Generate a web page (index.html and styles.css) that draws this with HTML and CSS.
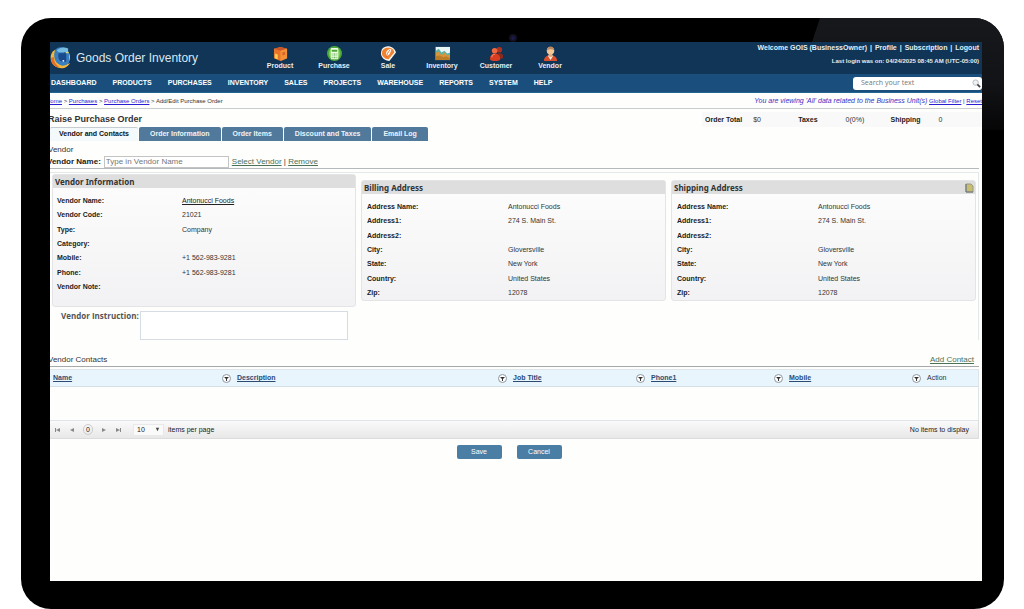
FILE: index.html
```
<!DOCTYPE html>
<html lang="en">
<head>
    <meta charset="UTF-8">
    <meta name="viewport" content="width=device-width, initial-scale=1.0">
    <title>Goods Order Inventory - Raise Purchase Order</title>
    <link rel="stylesheet" href="styles.css">
</head>
<body>
    <div class="device">
        <span class="camera"></span>
        <div class="screen">
            <header class="header">
                <div class="brand">
                    <svg class="logo" viewBox="0 0 22 24">
                        <path d="M3 5C-1 10 0 19 8 22c5 2 11 0 13-5-4 3-9 3-12 0C5 14 4 9 6 3z" fill="#f2b63c"/>
                        <path d="M1 12c0 6 4 10 9 10-4-3-6-6-6-11z" fill="#e0702c"/>
                        <path d="M17 3c5 4 5 11 1 16l-3-2c3-4 3-9 0-13z" fill="#e9e36a"/>
                        <path d="M5 5c-2 7 1 14 8 15 4 0 7-2 7-4V7h-5V1C10 0 6 1 5 5z" fill="#3a7fc0"/>
                        <path d="M7 4c3-3 8-4 12-2v4H9z" fill="#79bce3"/>
                        <path d="M9 7h8v9h-4c-4-1-5-5-4-9z" fill="#1b4a8c"/>
                        <circle cx="14" cy="15" r="1" fill="#fff"/>
                    </svg>
                    <span>Goods Order Inventory</span>
                </div>
                <nav class="shortcuts">
                    <a href="#">
                        <svg viewBox="0 0 16 16">
                            <path d="M1 3l7-2 7 2v10l-7 3-7-3z" fill="#e8752a"/>
                            <path d="M1 3l7-2 7 2-7 2z" fill="#c9562a"/>
                            <path d="M8 5l7-2v10l-7 3z" fill="#f3913a"/>
                            <path d="M2 8l3 1v5l-3-1z" fill="#ffd34d"/>
                            <path d="M10 7l3-1v3l-3 1z" fill="#d8642a"/>
                        </svg>
                        Product
                    </a>
                    <a href="#">
                        <svg viewBox="0 0 16 16">
                            <circle cx="8" cy="8" r="8" fill="#4da83a"/>
                            <circle cx="8" cy="8" r="6" fill="#79cf4b"/>
                            <rect x="4" y="2" width="8" height="12" rx="1" fill="#f1fbe9"/>
                            <path d="M5 4h6v2H5zM5 8h1v1H5zM7 8h2v1H7zM10 8h1v1h-1zM5 10h1v1H5zM7 10h2v1H7zM10 10h1v1h-1zM5 12h1v1H5zM7 12h2v1H7zM10 12h1v1h-1z" fill="#4da83a"/>
                        </svg>
                        Purchase
                    </a>
                    <a href="#">
                        <svg viewBox="0 0 16 16">
                            <path d="M4 1c5-2 11 1 12 6l-7 9C4 16 0 12 0 8c0-3 1-6 4-7z" fill="#f6f1ea"/>
                            <path d="M5 2c5-1 9 1 9 5l-6 7C4 14 1 11 1 8c0-3 1-5 4-6z" fill="#f0812d"/>
                            <path d="M6 11c-2-4 1-8 5-8 0 3-2 7-5 8z" fill="#fff"/>
                            <path d="M6 12c0-3 1-5 4-8" stroke="#e8611f" fill="none"/>
                        </svg>
                        Sale
                    </a>
                    <a href="#">
                        <svg viewBox="0 0 16 16">
                            <rect y="1" width="16" height="14" fill="#eaf6f5"/>
                            <path d="M1 5l3-2 3 4 3-2 3 3 3-1v7H1z" fill="#5fb3a5"/>
                            <path d="M1 7l3-1 3 4 3-3 3 3 3-1v6H1z" fill="#d99438"/>
                            <path d="M1 11l4-1 4 2 3-1 4 2v2H1z" fill="#b97d2a"/>
                            <path d="M0 1h1v14H0z" fill="#8b6a3c"/>
                        </svg>
                        Inventory
                    </a>
                    <a href="#">
                        <svg viewBox="0 0 16 16">
                            <circle cx="11" cy="4" r="3" fill="#b03220"/>
                            <path d="M8 14V9c1-2 6-2 7 1v3z" fill="#8e2a1c"/>
                            <circle cx="6" cy="5" r="3" fill="#f0683f"/>
                            <path d="M1 14c0-4 2-6 5-6s6 2 6 6c-2 3-9 3-11 0z" fill="#d93e23"/>
                            <path d="M3 12c0-2 1-3 3-3" stroke="#ff9a72" fill="none"/>
                        </svg>
                        Customer
                    </a>
                    <a href="#">
                        <svg viewBox="0 0 16 16">
                            <path d="M1 16c0-4 2-6 7-6s7 2 7 6z" fill="#d8502b"/>
                            <path d="M5 10l3 5 3-5z" fill="#f7efe6"/>
                            <path d="M6 8h4v3l-2 1-2-1z" fill="#e0a878"/>
                            <circle cx="8" cy="5" r="4" fill="#f3c795"/>
                            <path d="M4 5c0-6 8-6 8 0-2-2-5-2-8 0z" fill="#b98a62"/>
                        </svg>
                        Vendor
                    </a>
                </nav>
                <div class="account">
                    <div class="account-links">
                        Welcome GOIS (BusinessOwner) <i>|</i> <a href="#">Profile</a> <i>|</i> <a href="#">Subscription</a> <i>|</i> <a href="#">Logout</a>
                    </div>
                    <div class="last-login">Last login was on: 04/24/2025 08:45 AM (UTC-05:00)</div>
                </div>
            </header>

            <div class="menubar">
                <nav class="menu">
                    <a href="#">DASHBOARD</a>
                    <a href="#">PRODUCTS</a>
                    <a href="#">PURCHASES</a>
                    <a href="#">INVENTORY</a>
                    <a href="#">SALES</a>
                    <a href="#">PROJECTS</a>
                    <a href="#">WAREHOUSE</a>
                    <a href="#">REPORTS</a>
                    <a href="#">SYSTEM</a>
                    <a href="#">HELP</a>
                </nav>
                <form class="search">
                    <input type="text" placeholder="Search your text" aria-label="Search">
                    <button type="button" aria-label="Search">
                        <svg viewBox="0 0 10 10">
                            <circle cx="4" cy="4" r="3" fill="#eef2f4" stroke="#b4b9bd"/>
                            <path d="M6 6l3 3" stroke="#444" stroke-width="2"/>
                        </svg>
                    </button>
                </form>
            </div>

            <div class="crumbs">
                <div class="trail">
                    <a href="#">Home</a> &gt; <a href="#">Purchases</a> &gt; <a href="#">Purchase Orders</a> &gt; Add/Edit Purchase Order
                </div>
                <div class="filter-note">
                    <em>You are viewing 'All' data related to the Business Unit(s)</em>
                    <a href="#">Global Filter</a> | <a href="#">Reset</a>
                </div>
            </div>

            <div class="title-row">
                <h1>Raise Purchase Order</h1>
                <dl class="totals">
                    <dt>Order Total</dt><dd>$0</dd>
                    <dt>Taxes</dt><dd class="taxes">0(0%)</dd>
                    <dt>Shipping</dt><dd class="shipping">0</dd>
                </dl>
            </div>

            <div class="tabs">
                <button class="tab active">Vendor and Contacts</button>
                <button class="tab">Order Information</button>
                <button class="tab">Order Items</button>
                <button class="tab">Discount and Taxes</button>
                <button class="tab">Email Log</button>
            </div>

            <main class="content">
                <h2 class="section-title">Vendor</h2>
                <div class="vendor-row">
                    <label for="vendor">Vendor Name:</label>
                    <input id="vendor" type="text" placeholder="Type in Vendor Name">
                    <span><a href="#">Select Vendor</a> | <a href="#">Remove</a></span>
                </div>

                <div class="panels">
                    <div class="vendor-col">
                        <section class="panel vendor-panel">
                            <h3>Vendor Information</h3>
                            <table>
                                <tr><th>Vendor Name:</th><td><a href="#">Antonucci Foods</a></td></tr>
                                <tr><th>Vendor Code:</th><td>21021</td></tr>
                                <tr><th>Type:</th><td>Company</td></tr>
                                <tr><th>Category:</th><td></td></tr>
                                <tr><th>Mobile:</th><td>+1 562-983-9281</td></tr>
                                <tr><th>Phone:</th><td>+1 562-983-9281</td></tr>
                                <tr><th>Vendor Note:</th><td></td></tr>
                            </table>
                        </section>
                        <div class="instruction">
                            <label for="instruction">Vendor Instruction:</label>
                            <textarea id="instruction"></textarea>
                        </div>
                    </div>
                    <section class="panel address-panel">
                        <h3>Billing Address</h3>
                        <table>
                            <tr><th>Address Name:</th><td>Antonucci Foods</td></tr>
                            <tr><th>Address1:</th><td>274 S. Main St.</td></tr>
                            <tr><th>Address2:</th><td></td></tr>
                            <tr><th>City:</th><td>Gloversville</td></tr>
                            <tr><th>State:</th><td>New York</td></tr>
                            <tr><th>Country:</th><td>United States</td></tr>
                            <tr><th>Zip:</th><td>12078</td></tr>
                        </table>
                    </section>
                    <section class="panel address-panel">
                        <h3>
                            Shipping Address
                            <button type="button" class="book" aria-label="Address book">
                                <svg viewBox="0 0 9 10">
                                    <path d="M1 1h5l2 2v6H1z" fill="#c9bd72" stroke="#9a9a86"/>
                                    <path d="M1 1v8h7" fill="none" stroke="#66757f"/>
                                </svg>
                            </button>
                        </h3>
                        <table>
                            <tr><th>Address Name:</th><td>Antonucci Foods</td></tr>
                            <tr><th>Address1:</th><td>274 S. Main St.</td></tr>
                            <tr><th>Address2:</th><td></td></tr>
                            <tr><th>City:</th><td>Gloversville</td></tr>
                            <tr><th>State:</th><td>New York</td></tr>
                            <tr><th>Country:</th><td>United States</td></tr>
                            <tr><th>Zip:</th><td>12078</td></tr>
                        </table>
                    </section>
                </div>

                <div class="contacts-head">
                    <h2 class="section-title">Vendor Contacts</h2>
                    <a href="#">Add Contact</a>
                </div>

                <table class="grid">
                    <colgroup>
                        <col class="col-name"><col class="col-desc"><col class="col-std"><col class="col-std"><col class="col-std"><col>
                    </colgroup>
                    <thead>
                        <tr>
                            <th><div><a href="#">Name</a><button class="funnel" aria-label="Filter name"><svg viewBox="0 0 9 9"><circle cx="4.5" cy="4.5" r="4" fill="#fff" stroke="#8d979f"/><path d="M2 3h5L5 5v2H4V5z" fill="#333"/></svg></button></div></th>
                            <th><div><a href="#">Description</a><button class="funnel" aria-label="Filter description"><svg viewBox="0 0 9 9"><circle cx="4.5" cy="4.5" r="4" fill="#fff" stroke="#8d979f"/><path d="M2 3h5L5 5v2H4V5z" fill="#333"/></svg></button></div></th>
                            <th><div><a href="#">Job Title</a><button class="funnel" aria-label="Filter job title"><svg viewBox="0 0 9 9"><circle cx="4.5" cy="4.5" r="4" fill="#fff" stroke="#8d979f"/><path d="M2 3h5L5 5v2H4V5z" fill="#333"/></svg></button></div></th>
                            <th><div><a href="#">Phone1</a><button class="funnel" aria-label="Filter phone"><svg viewBox="0 0 9 9"><circle cx="4.5" cy="4.5" r="4" fill="#fff" stroke="#8d979f"/><path d="M2 3h5L5 5v2H4V5z" fill="#333"/></svg></button></div></th>
                            <th><div><a href="#">Mobile</a><button class="funnel" aria-label="Filter mobile"><svg viewBox="0 0 9 9"><circle cx="4.5" cy="4.5" r="4" fill="#fff" stroke="#8d979f"/><path d="M2 3h5L5 5v2H4V5z" fill="#333"/></svg></button></div></th>
                            <th class="action">Action</th>
                        </tr>
                    </thead>
                    <tbody>
                        <tr><td colspan="6"></td></tr>
                    </tbody>
                </table>
                <div class="pager">
                    <button aria-label="First page"><svg viewBox="0 0 6 6"><path d="M0 1h1v4H0zM5 1v4L1 3z"/></svg></button>
                    <button aria-label="Previous page"><svg viewBox="0 0 6 6"><path d="M5 1v4L1 3z"/></svg></button>
                    <span class="page-no">0</span>
                    <button aria-label="Next page"><svg viewBox="0 0 6 6"><path d="M1 1v4l4-2z"/></svg></button>
                    <button aria-label="Last page"><svg viewBox="0 0 6 6"><path d="M1 1v4l4-2zM5 1h1v4H5z"/></svg></button>
                    <div class="size">
                        <select id="page-size"><option>10</option></select>
                        <svg viewBox="0 0 6 6"><path d="M1 1h4L3 5z"/></svg>
                    </div>
                    <label for="page-size">items per page</label>
                    <span class="status">No items to display</span>
                </div>

                <div class="actions">
                    <button type="button">Save</button>
                    <button type="button">Cancel</button>
                </div>
            </main>
        </div>
    </div>
</body>
</html>
```
FILE: styles.css
```
* {
    box-sizing: border-box;
}
body {
    margin: 0;
    padding: 18px 20px 0 21px;
    height: 100vh;
    background: #fff;
    color: #333;
    font-family: "Liberation Sans", Arial, sans-serif;
    font-size: 7px;
    line-height: 10px;
}
h1, h2, h3, dl, dd {
    margin: 0;
}
button, input, select, textarea {
    margin: 0;
    padding: 0;
    border: none;
    background: none;
    color: inherit;
    font: inherit;
}
button {
    cursor: pointer;
}
svg {
    display: block;
}

/* tablet frame */
.device {
    position: relative;
    display: flex;
    min-height: 100%;
    padding: 24px 22px 28px 29px;
    border-radius: 30px;
    background: #000;
    overflow: hidden;
}
.device::before {
    content: "";
    position: absolute;
    top: 0;
    right: 0;
    width: 192px;
    height: 112px;
    background: linear-gradient(#17181c, #121316 60%, #060607);
    clip-path: polygon(8px 0, 100% 0, 100% 100%, 80% 100%, 80% 24px, 0 24px);
}
.camera {
    position: absolute;
    top: 16px;
    left: calc(50% - 4px);
    width: 8px;
    height: 8px;
    border: 2px solid #11111f;
    border-radius: 50%;
    background: #1d1a4a;
}
.screen {
    position: relative;
    flex: 1;
    min-width: 0;
    background: #fefefd;
    overflow: hidden;
}

/* top bar */
.header {
    display: flex;
    height: 32px;
    background: #103556;
    color: #e6eef5;
}
.brand {
    display: flex;
    align-items: center;
    gap: 5px;
    width: 203px;
    font-size: 12px;
    line-height: 14px;
    color: #dbe8f2;
}
.logo {
    width: 21px;
    height: 24px;
}
.shortcuts {
    display: flex;
    padding-top: 4px;
}
.shortcuts a {
    display: flex;
    flex-direction: column;
    align-items: center;
    width: 54px;
    color: #e6eef5;
    font-weight: bold;
    text-decoration: none;
}
.shortcuts svg {
    width: 15px;
    height: 15px;
}
.account {
    margin-left: auto;
    padding: 1px 3px 0 0;
    font-weight: bold;
    text-align: right;
    white-space: nowrap;
}
.account i {
    margin: 0 1px;
    font-style: normal;
}
.account a {
    color: inherit;
    text-decoration: none;
}
.last-login {
    margin-top: 3px;
    font-size: 6px;
}

.menubar {
    display: flex;
    align-items: center;
    justify-content: space-between;
    height: 19px;
    border-bottom: 1px solid #236690;
    background: #1a4f7d;
}
.menu {
    display: flex;
    gap: 16px;
    padding-left: 1px;
}
.menu a {
    color: #fff;
    font-weight: bold;
    text-decoration: none;
}
.search {
    display: flex;
    align-items: center;
    width: 129px;
    height: 13px;
    padding: 0 1px 0 8px;
    border-radius: 3px;
    background: #fff;
}
.search input {
    flex: 1;
    min-width: 0;
    outline: none;
    font-family: "Open Sans", sans-serif;
}
.search svg {
    width: 9px;
    height: 9px;
}
::placeholder {
    color: #777;
    opacity: 1;
}

.crumbs {
    display: flex;
    align-items: center;
    justify-content: space-between;
    height: 16px;
    border-bottom: 1px solid #c9cdd0;
    font-size: 6px;
}
.trail {
    margin-left: -4px;
}
.crumbs a {
    color: #2a1fd0;
}
.filter-note {
    white-space: nowrap;
}
.filter-note em {
    color: #3a2fc4;
    font-size: 7px;
}

/* title and tabs */
.title-row {
    display: flex;
    align-items: flex-end;
    justify-content: space-between;
    height: 18px;
}
.title-row h1 {
    margin-left: -2px;
    font-size: 9px;
    line-height: 16px;
}
.totals {
    display: flex;
    width: 280px;
    height: 15px;
    padding-left: 3px;
    background: #f9f9f9;
    line-height: 16px;
}
.totals dt {
    margin-right: 11px;
    color: #222;
    font-weight: bold;
}
.totals dd {
    width: 45px;
}
.totals dt:nth-of-type(2) {
    margin-right: 28px;
}
.totals dt:nth-of-type(3) {
    margin-right: 18px;
}
.totals .shipping {
    width: auto;
}
.tabs {
    display: flex;
    gap: 1px;
}
.tab {
    height: 14px;
    padding: 0 11px;
    border-radius: 2px 2px 0 0;
    background: #50799b;
    color: #eef4f8;
    font-weight: bold;
}
.tab.active {
    padding: 0 9px 1px;
    border-top: 1px solid #c5ccd2;
    background: #f4f9fb;
    color: #111;
}

/* vendor section */
.content {
    margin-right: 3px;
    padding-top: 4px;
}
.section-title {
    margin-left: -2px;
    font-size: 8px;
    font-weight: normal;
}
.vendor-row {
    display: flex;
    align-items: center;
    gap: 3px;
    height: 14px;
    border-bottom: 1px solid #b5b9bb;
    font-size: 8px;
}
.vendor-row label {
    margin-left: -3px;
    color: #222;
    font-weight: bold;
}
.vendor-row input {
    width: 125px;
    height: 12px;
    padding: 0 1px;
    border: 1px solid #c4c4c4;
    background: #fff;
}
.vendor-row a, .contacts-head a {
    color: #4b7158;
}
.panels {
    display: flex;
    align-items: flex-start;
    gap: 5px;
    margin-top: 3px;
    padding: 1px 2px 0 3px;
    border: 1px solid #e3e8e8;
    border-width: 1px 1px 0 0;
}
.vendor-col, .address-panel {
    flex: 1;
    min-width: 0;
}
.panel {
    border: 1px solid #e4e4e6;
    border-radius: 3px;
    background: linear-gradient(#fdfdfd, #f2f2f4);
}
.panel h3 {
    display: flex;
    align-items: center;
    justify-content: space-between;
    height: 13px;
    padding: 0 1px 0 2px;
    background: #dedede;
    font-family: "Noto Sans", "Open Sans", sans-serif;
    font-size: 8px;
}
.panel table {
    width: 100%;
    height: 100px;
    margin-top: 6px;
    border-collapse: collapse;
}
.panel th, .panel td {
    padding: 0;
    text-align: left;
}
.panel th {
    width: 146px;
    padding-left: 5px;
    color: #222;
}
.panel td a {
    color: #222;
}
.vendor-panel {
    margin-left: -1px;
    padding-bottom: 12px;
}
.vendor-panel th {
    width: 129px;
    padding-left: 4px;
}
.address-panel {
    margin-top: 6px;
}
.book svg {
    width: 9px;
    height: 10px;
}
.instruction {
    display: flex;
    gap: 1px;
    margin-top: 4px;
    padding: 0 8px;
}
.instruction label {
    color: #555;
    font-family: "Open Sans", "Noto Sans", sans-serif;
    font-size: 8px;
    font-weight: bold;
    white-space: nowrap;
}
.instruction textarea {
    flex: 1;
    min-width: 0;
    height: 29px;
    border: 1px solid #d5dce3;
    background: #fff;
    resize: none;
}

/* contacts grid */
.contacts-head {
    display: flex;
    align-items: flex-end;
    justify-content: space-between;
    height: 27px;
    padding: 0 5px 1px 0;
    border-bottom: 1px solid #a5a9ab;
    font-size: 8px;
}
.grid {
    width: 100%;
    margin-top: 2px;
    border: 1px solid #dfe6ea;
    border-left: none;
    border-collapse: separate;
    border-spacing: 0;
    table-layout: fixed;
}
.col-name {
    width: 184px;
}
.col-desc {
    width: 276px;
}
.col-std {
    width: 138px;
}
.grid th {
    height: 17px;
    padding: 0 0 0 3px;
    border-bottom: 1px solid #d3e0e8;
    background: #e9f5fd;
    font-weight: normal;
    text-align: left;
}
.grid th div {
    display: flex;
    align-items: center;
    justify-content: space-between;
    padding-right: 3px;
}
.grid th a {
    color: #2d4a73;
    font-weight: bold;
}
.grid td {
    height: 33px;
    padding: 0;
}
.funnel svg {
    width: 9px;
    height: 9px;
}
.pager {
    display: flex;
    align-items: center;
    gap: 8px;
    height: 18px;
    padding: 0 9px 0 5px;
    border: 1px solid #dcdcdc;
    border-width: 0 1px 1px 0;
    background: linear-gradient(#fafafa, #e8e8e8);
    color: #222;
}
.pager svg {
    width: 6px;
    height: 6px;
    fill: #888;
}
.page-no {
    width: 10px;
    border: 1px solid #ccc;
    border-radius: 5px;
    line-height: 9px;
    text-align: center;
}
.size {
    display: flex;
    align-items: center;
    width: 31px;
    height: 12px;
    margin: 0 -4px 0 4px;
    padding: 0 3px;
    border: 1px solid #e9e9e9;
    background: #fafafa;
}
.size select {
    flex: 1;
    min-width: 0;
    appearance: none;
}
.pager .size svg {
    width: 5px;
    height: 5px;
    fill: #444;
}
.status {
    margin-left: auto;
}
.actions {
    display: flex;
    justify-content: center;
    gap: 15px;
    padding: 6px 11px 0 0;
}
.actions button {
    width: 45px;
    height: 14px;
    border-radius: 2px;
    background: #4b7ea5;
    color: #fff;
}
```
